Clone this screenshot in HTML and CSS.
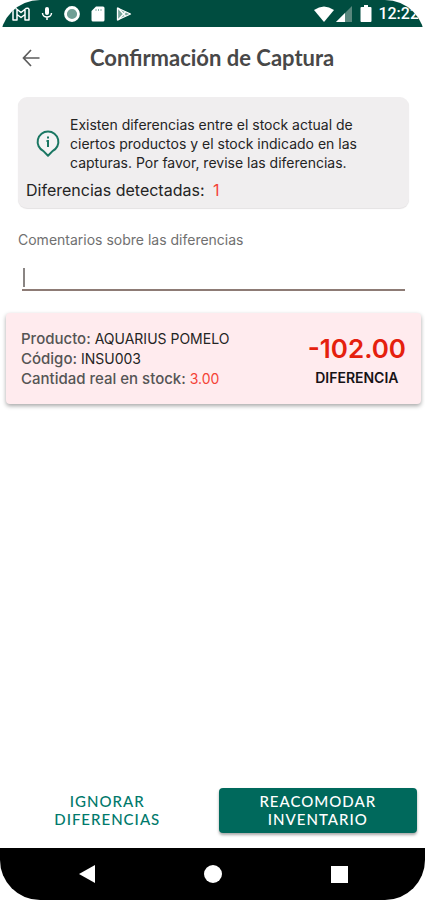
FILE: index.html
```html
<!DOCTYPE html>
<html lang="es">
<head>
<meta charset="utf-8">
<meta name="viewport" content="width=device-width, initial-scale=1">
<title>Confirmación de Captura</title>
<link rel="stylesheet" href="styles.css">
</head>
<body>
<div class="screen">
  <div class="status">
    <div class="status-group status-left">
      <svg width="18" height="16" viewBox="0 0 18 16" fill="none" stroke="#fff" stroke-width="1.5" stroke-linejoin="round"><path d="M1 14V3.500Q1.500 1.500 4 2.500L9 6.500l5-4Q16.500 1.500 17 3.500V14H13V8.500L9 11.500 5 8.500V14zM5 8.500V4M13 8.500V4"/></svg>
      <svg width="12" height="16" viewBox="0 0 12 16"><rect x="4" y="1" width="4" height="8" rx="2" fill="#fff"/><path d="M1.500 7a4.500 4 0 0 0 9 0M6 11v3" fill="none" stroke="#fff" stroke-width="1.500"/></svg>
      <svg width="16" height="16" viewBox="0 0 16 16"><circle cx="8" cy="8" r="6.500" fill="#6f9f95" stroke="#fff" stroke-width="2.800"/></svg>
      <svg width="14" height="16" viewBox="0 0 14 16"><path fill="#fff" d="M5 .5h7q1.500 0 1.500 1.500v12q0 1.500-1.500 1.500H2Q.5 15.500.5 14V5z"/><path d="M5 3v2M7.500 3v2M10 3v2" stroke="#8db3ab"/></svg>
      <svg width="16" height="16" viewBox="0 0 16 16"><path d="M1.500 2v12L14.500 8z" fill="#79a59b" stroke="#fff" stroke-width="1.300" stroke-linejoin="round"/><path d="M2 2l7.500 8M2 14l7.500-8" stroke="#fff" stroke-width="1.300"/></svg>
    </div>
    <div class="status-group status-right">
      <svg class="wifi" width="20" height="16" viewBox="0 0 20 16"><path d="M0 4Q10-3 20 4L10 16z" fill="#fff"/></svg>
      <svg class="signal" width="16" height="16" viewBox="0 0 16 16"><path d="M0 16L16 0v16z" fill="#58877d"/><path d="M0 16L9 7v9z" fill="#fff"/></svg>
      <svg class="battery" width="12" height="17" viewBox="0 0 12 17"><path d="M1.500 2H4V0h4v2h2.500q1 0 1 1v13q0 1-1 1h-9q-1 0-1-1V3q0-1 1-1z" fill="#fff"/></svg>
      <span class="clock">12:22</span>
    </div>
  </div>

  <header class="appbar">
    <button class="back" type="button" aria-label="Volver">
      <svg width="18" height="18" viewBox="0 0 18 18" fill="none" stroke="#5c5c5c" stroke-width="1.700"><path d="M17.500 9H1.500M9 1L1.500 9 9 17"/></svg>
    </button>
    <h1>Confirmación de Captura</h1>
  </header>

  <main>
    <section class="notice">
      <div class="notice-row">
        <svg class="info" width="24" height="28" viewBox="0 0 24 28"><path d="M12 1.500a10.300 10.300 0 0 1 4.500 19.600L12 25.800 7.500 21.100A10.300 10.300 0 0 1 12 1.500z" fill="#fff" fill-opacity=".3" stroke="#1b7763" stroke-width="2" stroke-linejoin="round"/><path d="M10.500 11H12v6M12 6.500v2" fill="none" stroke="#1b7763" stroke-width="2"/></svg>
        <p>Existen diferencias entre el stock actual de ciertos productos y el stock indicado en las capturas. Por favor, revise las diferencias.</p>
      </div>
      <p class="detected">Diferencias detectadas: <span>1</span></p>
    </section>

    <div class="field">
      <label for="comments">Comentarios sobre las diferencias</label>
      <input id="comments" type="text">
    </div>

    <article class="card">
      <div class="details">
        <p><b>Producto:</b> AQUARIUS POMELO</p>
        <p><b>Código:</b> INSU003</p>
        <p><b>Cantidad real en stock:</b> <span>3.00</span></p>
      </div>
      <div class="difference">
        <strong>-102.00</strong>
        <span>DIFERENCIA</span>
      </div>
    </article>
  </main>

  <div class="actions">
    <button class="btn" type="button">IGNORAR DIFERENCIAS</button>
    <button class="btn primary" type="button">REACOMODAR INVENTARIO</button>
  </div>

  <nav class="navbar">
    <button type="button" aria-label="Atrás"><svg width="18" height="18" viewBox="0 0 18 18"><path d="M17 0v18L1 9z" fill="#fff"/></svg></button>
    <button type="button" aria-label="Inicio"><svg width="18" height="18" viewBox="0 0 18 18"><circle cx="9" cy="9" r="9" fill="#fff"/></svg></button>
    <button type="button" aria-label="Recientes"><svg width="18" height="18" viewBox="0 0 18 18"><rect x="1" y="1" width="17" height="17" fill="#fff"/></svg></button>
  </nav>
</div>
</body>
</html>
```
FILE: styles.css
```css
* { box-sizing: border-box; }

body {
  margin: 0;
  background: #fff;
  color: #242424;
  font-family: Inter, "Liberation Sans", sans-serif;
  font-size: 14px;
}

h1, p { margin: 0; }

button {
  border: 0;
  padding: 0;
  background: none;
  font: inherit;
}

svg { display: block; flex: none; }

.screen {
  display: flex;
  flex-direction: column;
  min-height: 100vh;
  border-radius: 40px;
  overflow: hidden;
  background: #fff;
}

.status {
  display: flex;
  justify-content: space-between;
  height: 27px;
  padding: 0 6px 0 12px;
  background: #004d40;
}

.status-group { display: flex; align-items: center; }
.status-left { gap: 11px; }
.status-right { gap: 2px; }
.battery { margin-left: 6px; }

.clock {
  margin-left: 4px;
  color: #fff;
  font: 500 16px/20px Roboto, sans-serif;
}

.appbar {
  display: flex;
  align-items: center;
  gap: 50px;
  height: 61px;
  padding: 0 22px;
}

h1 {
  color: #484848;
  font: 700 22px/28px Lato, sans-serif;
}

main {
  flex: 1;
  display: flex;
  flex-direction: column;
}

.notice {
  margin: 9px 16px 0 18px;
  padding: 18px 8px 8px;
  border-radius: 9px;
  background: #f0eeef;
  box-shadow: 0 1px 1px #e4e2e3;
}

.notice-row {
  display: flex;
  align-items: center;
  gap: 10px;
  padding: 0 24px 0 10px;
  line-height: 19px;
}

.detected {
  margin-top: 8px;
  font-size: 16px;
  line-height: 20px;
}

.detected span { margin-left: 4px; color: #f44336; }

.field {
  display: flex;
  flex-direction: column;
  padding: 23px 20px 0 18px;
}

.field label {
  color: #707070;
  line-height: 18px;
}

.field input {
  height: 42px;
  margin-left: 4px;
  padding: 0 4px;
  border: 0;
  border-bottom: 2px solid #8d7b75;
  outline: 0;
  background: linear-gradient(#8a8583, #8a8583) 1px 19px / 2px 19px no-repeat;
  font: inherit;
}

.card {
  display: flex;
  align-items: center;
  justify-content: space-between;
  margin: 22px 4px 0 6px;
  padding: 14px 15px;
  border-radius: 4px;
  background: #ffebee;
  box-shadow: 0 2px 4px #00000059;
}

.details { line-height: 20px; }
.details b { color: #555; font-size: 15px; font-weight: 500; }
.details span { color: #f44336; }

.difference {
  display: flex;
  flex-direction: column;
  align-items: center;
  gap: 3px;
  padding-top: 8px;
}

.difference strong {
  color: #e5200d;
  font-size: 26px;
  font-weight: 600;
  line-height: 28px;
}

.difference span {
  color: #171215;
  font-weight: 600;
  line-height: 24px;
}

.actions {
  display: grid;
  grid-template-columns: 1fr 1fr;
  gap: 12px;
  padding: 0 8px 15px;
}

.btn {
  height: 45px;
  padding: 0 40px 2px;
  border-radius: 4px;
  color: #00796b;
  font: 500 15px/18px Lato, sans-serif;
  letter-spacing: 1px;
}

.primary {
  background: #00695c;
  box-shadow: 0 2px 3px #00000059;
  color: #fff;
}

.navbar {
  display: grid;
  grid-template-columns: repeat(3, 126px);
  justify-content: center;
  height: 52px;
  background: #000;
}

.navbar button { display: grid; place-items: center; }
```
